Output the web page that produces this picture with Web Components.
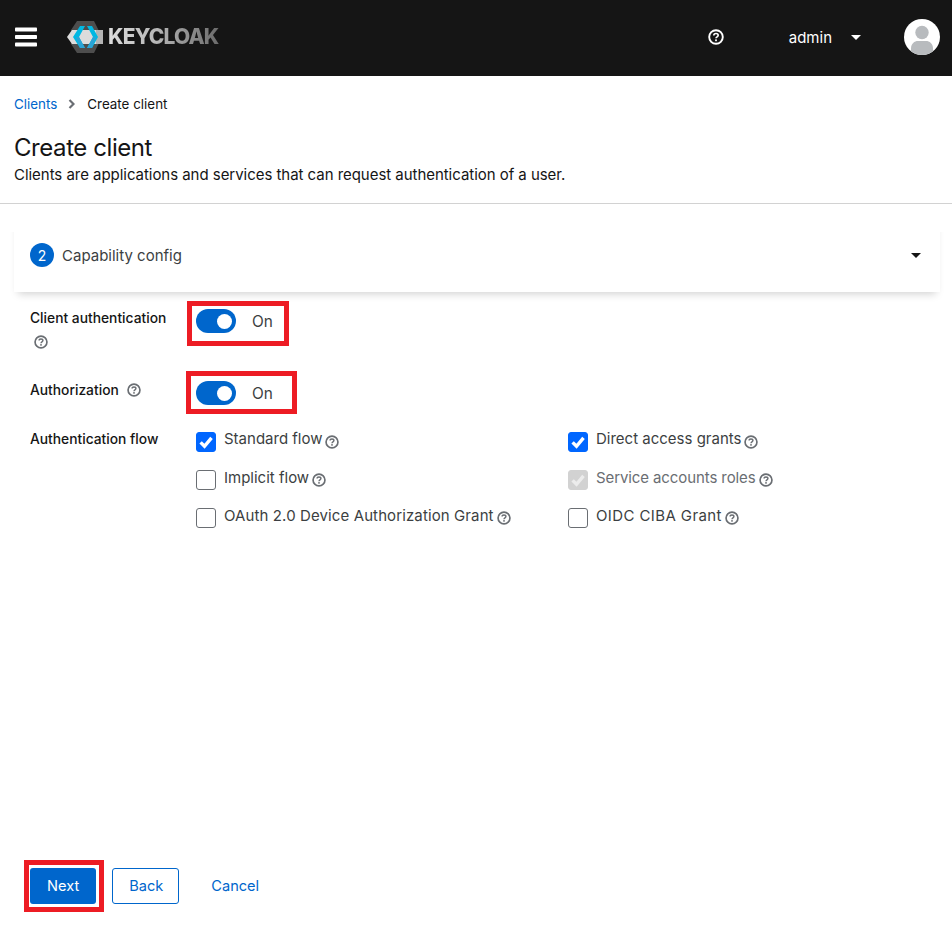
<!DOCTYPE html>
<html lang="en">
<head>
<meta charset="utf-8">
<title>Create client</title>
<style>
  html, body { margin: 0; padding: 0; background: #fff; }
  body { font-family: Inter, "Open Sans", "Liberation Sans", sans-serif; color: #151515; }
</style>
</head>
<body>
<kc-page>
  <kc-masthead slot="top"></kc-masthead>
  <kc-breadcrumb slot="top" current="Create client">Clients</kc-breadcrumb>
  <kc-title slot="top" heading="Create client">Clients are applications and services that can request authentication of a user.</kc-title>
  <kc-step slot="top" number="2">Capability config</kc-step>

  <kc-form slot="top">
    <kc-row label="Client authentication" wrap-help top="8">
      <kc-switch highlight box="-8 -16 -13 -9"></kc-switch>
    </kc-row>
    <kc-row label="Authorization" top="24" help>
      <kc-switch highlight box="-10 -24 -9 -10"></kc-switch>
    </kc-row>
    <kc-row label="Authentication flow" top="12">
      <kc-checks>
        <kc-check checked>Standard flow</kc-check>
        <kc-check checked>Direct access grants</kc-check>
        <kc-check low>Implicit flow</kc-check>
        <kc-check low checked disabled spacing="-0.1">Service accounts roles</kc-check>
        <kc-check low spacing="0.11">OAuth 2.0 Device Authorization Grant</kc-check>
        <kc-check low spacing="0.4">OIDC CIBA Grant</kc-check>
      </kc-checks>
    </kc-row>
  </kc-form>

  <kc-actions slot="bottom">
    <kc-button variant="primary" highlight>Next</kc-button>
    <kc-button variant="secondary">Back</kc-button>
    <kc-button variant="link">Cancel</kc-button>
  </kc-actions>
</kc-page>

<script>
const HELP_ICON = `<svg viewBox="0 0 16 16" width="100%" height="100%" fill="none" aria-hidden="true">
  <circle cx="8" cy="8" r="6.8" stroke="currentColor" stroke-width="1.9"/>
  <path d="M5.8 6.4c0-1.2 1-1.9 2.2-1.9s2.2.7 2.2 1.8c0 1.5-2.2 1.5-2.2 3" stroke="currentColor" stroke-width="1.6"/>
  <rect x="7.1" y="10.4" width="1.8" height="1.8" fill="currentColor"/>
</svg>`;

class KcElement extends HTMLElement {
  constructor() {
    super();
    this.attachShadow({ mode: "open" });
  }
  connectedCallback() {
    this.shadowRoot.innerHTML = `<style>${this.getStyles()}</style>${this.getTemplate()}`;
  }
  getStyles() { return ":host { display: block; }"; }
  getTemplate() { return "<slot></slot>"; }
}

class KcPage extends KcElement {
  getStyles() {
    return `
      :host { display: flex; flex-direction: column; justify-content: space-between; min-height: 932px; box-sizing: border-box; }
      .top { display: block; }
    `;
  }
  getTemplate() {
    return `<div class="top"><slot name="top"></slot><slot></slot></div><slot name="bottom"></slot>`;
  }
}

class KcMasthead extends KcElement {
  getStyles() {
    return `
      :host { display: flex; align-items: center; height: 76px; background: #151515; color: #fff; padding: 0 12px 2px 15px; box-sizing: border-box; }
      .bars { width: 22px; height: 20px; display: block; }
      .brand { display: flex; align-items: center; margin-left: 30px; }
      .brand svg { display: block; width: 38px; height: 34px; }
      .word {
        font: 800 21px/24px Inter, sans-serif; letter-spacing: -0.8px; margin-left: 3px;
        background: linear-gradient(90deg, #dedede 0%, #b5b5b5 45%, #6b6b6b 100%);
        -webkit-background-clip: text; background-clip: text; color: transparent;
      }
      .help { width: 16px; height: 16px; margin-left: auto; }
      .user { display: flex; align-items: center; margin-left: 65px; font-size: 15px; }
      .caret { width: 10px; height: 5px; margin-left: 19px; }
      .avatar { width: 36px; height: 36px; margin-left: 43px; display: block; }
    `;
  }
  getTemplate() {
    return `
      <svg class="bars" viewBox="0 0 22 20" aria-hidden="true">
        <rect x="0" y="0.5" width="22" height="4" rx="0.8" fill="#fff"/>
        <rect x="0" y="8" width="22" height="4" rx="0.8" fill="#fff"/>
        <rect x="0" y="15.5" width="22" height="4" rx="0.8" fill="#fff"/>
      </svg>
      <div class="brand">
        <svg viewBox="0 0 38 34" aria-hidden="true">
          <polygon points="10,1 27,1 35,17 27,33 10,33 4,24 4,10" fill="#4d4d4d"/>
          <polygon points="5,10 36,10 36,24 5,24 0,17" fill="#dcdcdc"/>
          <polygon points="29,10 36,10 36,24 29,24" fill="#b4b4b4"/>
          <polygon points="13,6 18,6 12,17 18,28 13,28 6,17" fill="#00b8e3"/>
          <polygon points="9,17 12,17 18,28 13,28" fill="#2aa3d6"/>
          <polygon points="20,6 25,6 31,17 25,28 20,28 26,17" fill="#00b8e3"/>
          <polygon points="26,17 29,17 25,28 20,28" fill="#2aa3d6"/>
        </svg>
        <span class="word">KEYCLOAK</span>
      </div>
      <div class="help">${HELP_ICON}</div>
      <div class="user">admin
        <svg class="caret" viewBox="0 0 10 5" aria-hidden="true"><polygon points="0,0 10,0 5,5" fill="#fff"/></svg>
      </div>
      <svg class="avatar" viewBox="0 0 36 36" aria-hidden="true">
        <defs><clipPath id="a"><circle cx="18" cy="18" r="18"/></clipPath></defs>
        <circle cx="18" cy="18" r="18" fill="#fff"/>
        <g clip-path="url(#a)" fill="#b8bbbe">
          <circle cx="18" cy="13.5" r="6.7"/>
          <path d="M7 36v-6.5C7 24.5 10.5 22 14 22h8c3.5 0 7 2.5 7 7.5V36z"/>
        </g>
      </svg>
    `;
  }
}

class KcBreadcrumb extends KcElement {
  getStyles() {
    return `
      :host { display: flex; align-items: center; padding: 19px 14px 0; font-size: 13.4px; line-height: 18px; height: 18px; box-sizing: content-box; }
      a { color: #06c; text-decoration: none; }
      svg { width: 7px; height: 10px; margin: 0 12px 0 11px; }
    `;
  }
  getTemplate() {
    return `<a href="#"><slot></slot></a>
      <svg viewBox="0 0 7 10" aria-hidden="true"><path d="M1.5 1l4 4-4 4" fill="none" stroke="#6a6e73" stroke-width="2.2"/></svg>
      <span>${this.getAttribute("current")}</span>`;
  }
}

class KcTitle extends KcElement {
  getStyles() {
    return `
      :host { display: block; padding: 21px 14px 18px; border-bottom: 1px solid #d2d2d2; }
      h1 { margin: 0; font-size: 24px; line-height: 28px; font-weight: 400; letter-spacing: -0.43px; }
      p { margin: 3px 0 0; font-size: 15px; line-height: 20px; letter-spacing: -0.04px; }
    `;
  }
  getTemplate() {
    return `<h1>${this.getAttribute("heading")}</h1><p><slot></slot></p>`;
  }
}

class KcStep extends KcElement {
  getStyles() {
    return `
      :host { display: flex; align-items: center; height: 88px; margin: 0 12px 0 14px; padding: 14px 14px 0 16px; gap: 8px; box-sizing: border-box; font-size: 15px; color: #3c3f42;
        background: #fff; box-shadow: 0 6px 8px -4px rgba(3,3,3,.18); clip-path: inset(28px -20px -20px -20px); position: relative; }
      .num { width: 24px; height: 24px; border-radius: 50%; background: #06c; color: #fff; font-size: 14px; display: flex; align-items: center; justify-content: center; }
      svg { width: 10px; height: 5px; margin-left: auto; margin-right: 5px; }
    `;
  }
  getTemplate() {
    return `<span class="num">${this.getAttribute("number")}</span><span><slot></slot></span>
      <svg viewBox="0 0 10 5" aria-hidden="true"><polygon points="0,0 10,0 5,5" fill="#151515"/></svg>`;
  }
}

class KcForm extends KcElement {
  getStyles() { return `:host { display: block; padding: 0 30px; }`; }
}

class KcRow extends KcElement {
  getStyles() {
    return `
      :host { display: grid; grid-template-columns: 166px 1fr; margin-top: ${this.getAttribute("top") || 0}px; }
      .label { font-size: 13.8px; line-height: 20px; font-weight: 500; padding-top: 8px; }
      .i { display: inline-block; width: 14px; height: 14px; color: #6a6e73; vertical-align: -2px; margin-left: 8px; }
      .below { display: block; margin: 6px 0 0 4px; width: 14px; height: 14px; color: #6a6e73; }
    `;
  }
  getTemplate() {
    const label = this.getAttribute("label");
    const inlineHelp = this.hasAttribute("help") ? `<span class="i">${HELP_ICON}</span>` : "";
    const below = this.hasAttribute("wrap-help") ? `<span class="below">${HELP_ICON}</span>` : "";
    return `<div class="label">${label}${inlineHelp}${below}</div><div><slot></slot></div>`;
  }
}

class KcSwitch extends KcElement {
  getStyles() {
    const [t, r, b, l] = (this.getAttribute("box") || "0 0 0 0").split(" ");
    return `
      :host { display: inline-flex; align-items: center; position: relative; font-size: 15.4px; color: #3c3f42; height: 24px; margin-top: 9px; }
      .track { width: 40px; height: 24px; border-radius: 12px; background: #06c; position: relative; margin-right: 16px; }
      .track::after { content: ""; position: absolute; right: 4px; top: 4.5px; width: 15px; height: 15px; border-radius: 50%; background: #fff; }
      :host([highlight])::after { content: ""; position: absolute; top: ${t}px; right: ${r}px; bottom: ${b}px; left: ${l}px; border: 5px solid #ed1c24; pointer-events: none; }
    `;
  }
  getTemplate() { return `<span class="track"></span><span>On</span>`; }
}

class KcChecks extends KcElement {
  getStyles() {
    return `:host { display: grid; grid-template-columns: 372px 1fr; row-gap: 18px; margin-top: 11px; }`;
  }
}

class KcCheck extends KcElement {
  getStyles() {
    return `
      :host { display: flex; align-items: flex-start; font-size: 15px; line-height: 20px; color: #3c3f42; letter-spacing: ${this.getAttribute("spacing") || 0}px; }
      :host([disabled]) { color: #6a6e73; }
      .box { width: 20px; height: 20px; box-sizing: border-box; border: 1px solid #6a6e73; border-radius: 3px; background: #fff; margin-right: 8px; flex: none; display: block; }
      :host([checked]) .box { background: #06f; border-color: #06f; }
      :host([disabled]) .box { background: #d2d2d2; border-color: #d2d2d2; }
      .box svg { display: block; width: 20px; height: 20px; margin: -1px; }
      .txt { margin-top: -3px; }
      :host([low]) .txt { margin-top: -2px; }
      .i { display: inline-block; width: 14px; height: 14px; color: #6a6e73; margin-left: 3px; margin-top: 2px; flex: none; }
    `;
  }
  getTemplate() {
    const color = this.hasAttribute("disabled") ? "#ececec" : "#fff";
    const tick = this.hasAttribute("checked")
      ? `<svg viewBox="0 0 20 20" aria-hidden="true"><path d="M4.6 10.4l3.9 3.9 7-8.4" fill="none" stroke="${color}" stroke-width="3.4"/></svg>`
      : "";
    return `<span class="box">${tick}</span><span class="txt"><slot></slot></span><span class="i">${HELP_ICON}</span>`;
  }
}

class KcActions extends KcElement {
  getStyles() {
    return `:host { display: flex; align-items: center; gap: 16px; padding: 0 30px 28px; }`;
  }
}

class KcButton extends KcElement {
  getStyles() {
    return `
      :host { display: inline-block; position: relative; font-size: 14.6px; }
      button { font: inherit; height: 36px; padding: 0 16px; border-radius: 3px; border: 1px solid transparent; background: none; cursor: pointer; box-sizing: border-box; display: block; }
      :host([variant="primary"]) button { background: #06c; color: #fff; }
      :host([variant="secondary"]) button { border-color: #06c; color: #06c; padding-right: 15px; }
      :host([variant="link"]) button { color: #06c; padding-left: 15px; }
      :host([highlight])::after { content: ""; position: absolute; inset: -8px -8px -8px -6px; border: 5px solid #ed1c24; pointer-events: none; }
    `;
  }
  getTemplate() { return `<button><slot></slot></button>`; }
}

const elements = {
  "kc-page": KcPage, "kc-masthead": KcMasthead, "kc-breadcrumb": KcBreadcrumb, "kc-title": KcTitle,
  "kc-step": KcStep, "kc-form": KcForm, "kc-row": KcRow, "kc-switch": KcSwitch, "kc-checks": KcChecks,
  "kc-check": KcCheck, "kc-actions": KcActions, "kc-button": KcButton
};
for (const [name, cls] of Object.entries(elements)) customElements.define(name, cls);
</script>
</body>
</html>
